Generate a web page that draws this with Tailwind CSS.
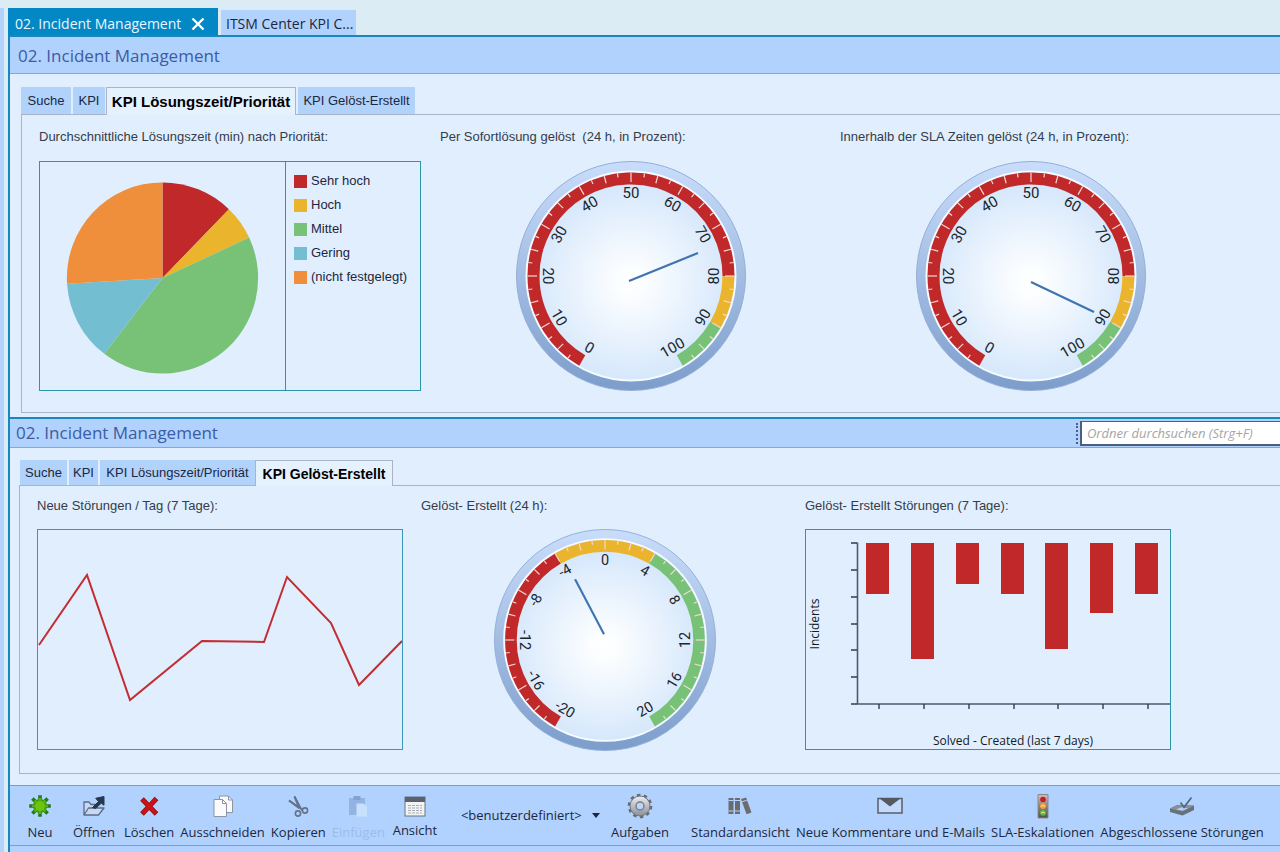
<!DOCTYPE html>
<html lang="de">
<head>
    <meta charset="UTF-8">
    <meta name="viewport" content="width=device-width, initial-scale=1.0">
    <title>02. Incident Management</title>
    <script src="https://cdn.jsdelivr.net/npm/@tailwindcss/browser@4"></script>
</head>
<body class="flex min-h-screen overflow-x-hidden bg-[#dcecf5] font-['Open_Sans','Noto_Sans',sans-serif] text-[#1c2740]">
    <div class="mt-2 w-1 shrink-0 bg-[#b3d3fd]"></div>

    <div class="flex min-w-0 grow flex-col pl-1 pt-2">
        <!-- Window tabs -->
        <nav class="flex items-end gap-[3px]">
            <button class="flex h-[27px] w-[210px] items-center gap-2.5 bg-[#0487c5] pl-[7px] pt-1 text-sm text-[#e8f6ff]">
                02. Incident Management
                <svg class="size-3.5" viewBox="0 0 14 14" stroke="#fff" stroke-width="2.4"><path d="M1.5 1.5l11 11M12.5 1.5l-11 11"/></svg>
            </button>
            <button class="h-[25px] w-[135px] bg-[#b1d2fd] pl-[5px] pt-[3px] text-left text-sm">ITSM Center KPI C...</button>
        </nav>

        <main class="flex grow flex-col border-l-2 border-t-2 border-[#1787bd] bg-[#e1eefe]">
            <!-- Upper window -->
            <header class="flex h-[37px] items-center border-b border-[#86a5d8] bg-[#b2d2fe] pl-2 pt-0.5">
                <h1 class="text-[17px] text-[#3b5ca3]">02. Incident Management</h1>
            </header>
            <section class="pl-[11px] pt-[13px] font-['Liberation_Sans',sans-serif]">
                <div class="-mb-px flex items-end text-[13px]">
                    <button class="mb-px h-[27px] w-[50px] bg-[#b1d2fb] text-center">Suche</button>
                    <button class="mb-px ml-[2px] h-[27px] w-8 bg-[#b1d2fb] text-center">KPI</button>
                    <button class="ml-px h-7 w-[190px] whitespace-nowrap border border-b-0 border-[#a9b5c6] bg-[#e6f1fe] pt-px text-[15px] font-bold text-black">KPI Lösungszeit/Priorität</button>
                    <button class="mb-px ml-[2px] h-[27px] w-[117px] whitespace-nowrap bg-[#b1d2fb] text-center">KPI Gelöst-Erstellt</button>
                </div>
                <div class="grid h-[299px] grid-cols-[401fr_400fr_440fr] border border-r-0 border-[#a9b5c6] pl-[17px] pt-3">
                    <div>
                        <h2 class="h-[34px] whitespace-nowrap text-[13px] text-[#333d4a]">Durchschnittliche Lösungszeit (min) nach Priorität:</h2>
                        <div class="flex h-[230px] w-[382px] border border-[#2d95a8]">
                            <svg id="pie" class="h-full w-[246px] border-r border-[#2d95a8]" viewBox="0 0 246 228"></svg>
                            <ul class="pl-2 pt-[7px] text-[13px] leading-6">
                                <li class="flex items-center gap-1"><span class="size-[13px] bg-[#c12829]"></span>Sehr hoch</li>
                                <li class="flex items-center gap-1"><span class="size-[13px] bg-[#ebb42d]"></span>Hoch</li>
                                <li class="flex items-center gap-1"><span class="size-[13px] bg-[#78c278]"></span>Mittel</li>
                                <li class="flex items-center gap-1"><span class="size-[13px] bg-[#74bed1]"></span>Gering</li>
                                <li class="flex items-center gap-1"><span class="size-[13px] bg-[#ef8e3b]"></span>(nicht festgelegt)</li>
                            </ul>
                        </div>
                    </div>
                    <div>
                        <h2 class="h-[34px] whitespace-nowrap text-[13px] text-[#333d4a]">Per Sofortlösung gelöst&nbsp; (24 h, in Prozent):</h2>
                        <svg id="gauge-direct" class="ml-[76px] size-[230px]" viewBox="-115 -115 230 230"></svg>
                    </div>
                    <div>
                        <h2 class="h-[34px] whitespace-nowrap text-[13px] text-[#333d4a]">Innerhalb der SLA Zeiten gelöst (24 h, in Prozent):</h2>
                        <svg id="gauge-sla" class="ml-[76px] size-[230px]" viewBox="-115 -115 230 230"></svg>
                    </div>
                </div>
            </section>

            <!-- Lower window -->
            <header class="mt-1 flex h-[31px] items-center justify-between border-b border-t-2 border-b-[#86a5d8] border-t-[#1787bd] bg-[#b2d2fe] pl-1.5">
                <h1 class="text-[17px] text-[#3b5ca3]">02. Incident Management</h1>
                <div class="flex gap-0.5">
                    <span class="my-0.5 border-l-2 border-dotted border-[#4a5f8e]"></span>
                    <input type="search" aria-label="Ordner durchsuchen" placeholder="Ordner durchsuchen (Strg+F)" class="h-[25px] w-[200px] border border-b-2 border-l-2 border-r-0 border-[#4d5f7e] bg-white pl-[5px] text-[13px] italic placeholder:text-[#a4a4a4]">
                </div>
            </header>
            <section class="pl-[9px] pt-3 font-['Liberation_Sans',sans-serif]">
                <div class="-mb-px flex items-end pl-px text-[13px]">
                    <button class="mb-px h-[25px] w-[47px] bg-[#b1d2fb] text-center">Suche</button>
                    <button class="mb-px ml-[2px] h-[25px] w-[29px] bg-[#b1d2fb] text-center">KPI</button>
                    <button class="mb-px ml-[2px] h-[25px] w-[155px] whitespace-nowrap bg-[#b1d2fb] text-center">KPI Lösungszeit/Priorität</button>
                    <button class="h-[26px] w-[138px] whitespace-nowrap border border-b-0 border-[#a9b5c6] bg-[#e6f1fe] text-sm font-bold text-black">KPI Gelöst-Erstellt</button>
                </div>
                <div class="grid h-[289px] grid-cols-[384fr_384fr_475fr] border border-r-0 border-[#a9b5c6] pl-[17px] pt-2.5">
                    <div>
                        <h2 class="h-[33px] whitespace-nowrap text-[13px] text-[#333d4a]">Neue Störungen / Tag (7 Tage):</h2>
                        <svg class="h-[221px] w-[366px] border border-[#3a97b8]" viewBox="0 0 364 219" fill="none">
                            <polyline points="1,115 49,45 92,170 164,111 226,112 249,47 293,93 321,155 364,111" stroke="#c32d31" stroke-width="2"/>
                        </svg>
                    </div>
                    <div>
                        <h2 class="h-[33px] whitespace-nowrap text-[13px] text-[#333d4a]">Gelöst- Erstellt (24 h):</h2>
                        <svg id="gauge-diff" class="ml-[73px] size-[222px]" viewBox="-115 -115 230 230"></svg>
                    </div>
                    <div>
                        <h2 class="h-[33px] whitespace-nowrap text-[13px] text-[#333d4a]">Gelöst- Erstellt Störungen (7 Tage):</h2>
                        <svg class="h-[221px] w-[366px] border border-[#2d95a8] font-['Open_Sans','Noto_Sans',sans-serif]" viewBox="0 0 364 219">
                            <g fill="#c12829">
                                <rect x="60" y="13" width="23" height="51"/>
                                <rect x="105" y="13" width="23" height="116"/>
                                <rect x="150" y="13" width="23" height="41"/>
                                <rect x="195" y="13" width="23" height="51"/>
                                <rect x="239" y="13" width="23" height="106"/>
                                <rect x="284" y="13" width="23" height="70"/>
                                <rect x="329" y="13" width="23" height="51"/>
                            </g>
                            <path d="M51.500 12.500V174H364" fill="none" stroke="#4a5a70" stroke-width="1.600"/>
                            <path d="M45 13H51M45 40H51M45 67H51M45 94H51M45 120H51M45 147H51M45 174H51M73 174V179M118 174V179M163 174V179M208 174V179M252 174V179M297 174V179M342 174V179" fill="none" stroke="#2f3c4e" stroke-width="1.400"/>
                            <text x="207" y="215" text-anchor="middle" font-size="12" fill="#111a26">Solved - Created (last 7 days)</text>
                            <text transform="translate(13 94) rotate(-90)" text-anchor="middle" font-size="12" fill="#111a26">Incidents</text>
                        </svg>
                    </div>
                </div>
            </section>

            <!-- Toolbar -->
            <footer class="mt-[11px] grow bg-[#b1d2fe]">
                <div class="flex h-[61px] items-start whitespace-nowrap border-y border-[#7d9bd0] pl-[3px] pt-1.5 text-[13px] leading-4">
                    <button class="flex min-w-[54px] flex-col items-center gap-1 px-[3px]">
                        <svg class="size-7" viewBox="0 0 28 28">
                            <path d="M14 3.200v21.600M3.200 14h21.600M6.400 6.400l15.200 15.200M21.600 6.400L6.400 21.600" stroke="#227a18" stroke-width="3.600"/>
                            <circle cx="14" cy="14" r="7" fill="#3f9a14"/>
                            <path d="M14 6v16M6 14h16M8.500 8.500l11 11M19.500 8.500l-11 11" stroke="#58b112" stroke-width="2.200"/>
                            <circle cx="14" cy="14" r="5" fill="#6cc40f"/>
                        </svg>
                        Neu
                    </button>
                    <button class="flex min-w-[54px] flex-col items-center gap-1 px-[3px]">
                        <svg class="size-7" viewBox="0 0 28 28" fill="none" stroke="#5c6b85" stroke-width="1.300" stroke-linejoin="round">
                            <path d="M4 23V10h5l2 2.500h6V16M4 23l4.500-7H24l-5.500 7z" fill="#c6daf5"/>
                            <path d="M12.500 15.500l6-6-2.800-3.200L24 4.500v8.700l-2.700-2-6 5.300z" fill="#26384f" stroke="#26384f" stroke-width="1"/>
                        </svg>
                        Öffnen
                    </button>
                    <button class="flex min-w-[54px] flex-col items-center gap-1 px-[3px]">
                        <svg class="size-7" viewBox="0 0 28 28" fill="none">
                            <path d="M7 7l14.500 15M21.500 6.500L7 22" stroke="#8e0f14" stroke-width="5"/>
                            <path d="M7.500 7.500l13.500 14M21 7L7.500 21.500" stroke="#cb1217" stroke-width="3.400"/>
                        </svg>
                        Löschen
                    </button>
                    <button class="flex min-w-[54px] flex-col items-center gap-1 px-[3px]">
                        <svg class="size-7" viewBox="0 0 28 28" fill="#fbfbfb" stroke="#8c95a3" stroke-linejoin="round">
                            <path d="M10.500 4h9l4 4v12.500h-13z"/><path d="M19.500 4v4h4" fill="none"/>
                            <path d="M5 7.500h8.500l4 4v13H5z"/><path d="M13.500 7.500v4h4" fill="none"/>
                        </svg>
                        Ausschneiden
                    </button>
                    <button class="flex min-w-[54px] flex-col items-center gap-1 px-[3px]">
                        <svg class="size-7" viewBox="0 0 28 28" fill="none" stroke="#63738c" stroke-width="1.600">
                            <path d="M10.500 4.500l7.500 14M5 8.500l14 9.500"/>
                            <path d="M10.500 4.500l5 12M5 8.500l10 7.500" stroke-width="2"/>
                            <circle cx="14" cy="21.500" r="2.600"/><circle cx="21" cy="18.500" r="2.600"/>
                        </svg>
                        Kopieren
                    </button>
                    <button disabled class="flex min-w-[54px] flex-col items-center gap-1 px-[3px] text-[#9dbbe8]">
                        <svg class="size-7" viewBox="0 0 28 28">
                            <path d="M5 6h16v17H5z" fill="#93b3e2"/><path d="M9.500 4h7v4h-7z" fill="#84a2d0"/>
                            <path d="M12.500 11.500h7l3.500 3.500v9.500H12.500z" fill="#c9e0fd"/>
                        </svg>
                        Einfügen
                    </button>
                    <button class="flex min-w-[54px] flex-col items-center gap-[2px] px-[3px]">
                        <svg class="size-7" viewBox="0 0 28 28">
                            <rect x="4" y="5" width="20" height="19" fill="#f3f3f3" stroke="#6b7280"/>
                            <path d="M4 5h20v5H4z" fill="#596273"/>
                            <path d="M7 13.500h14M7 16h14M7 18.500h14M7 21h14" stroke="#a5abb5" stroke-dasharray="3 1"/>
                        </svg>
                        Ansicht
                    </button>
                    <div class="relative ml-4 mt-[15px] w-[150px]">
                        <select aria-label="Ansicht" class="w-full appearance-none bg-transparent pl-[3px] text-[13px]">
                            <option>&lt;benutzerdefiniert&gt;</option>
                        </select>
                        <svg class="pointer-events-none absolute right-2 top-1.5 h-[5px] w-2" viewBox="0 0 8 5"><path d="M0 0h8L4 5z" fill="#1c2740"/></svg>
                    </div>
                    <button class="flex min-w-[54px] flex-col items-center gap-1 px-[3px]">
                        <svg class="size-7" viewBox="0 0 28 28">
                            <defs><linearGradient id="steel" x2="0" y2="1"><stop offset="0" stop-color="#eceef0"/><stop offset="1" stop-color="#8b8e96"/></linearGradient></defs>
                            <circle cx="14" cy="14" r="10.800" fill="none" stroke="#666b76" stroke-width="3" stroke-dasharray="3.393 3.393"/>
                            <circle cx="14" cy="14" r="10" fill="url(#steel)" stroke="#70757f" stroke-width="1"/>
                            <circle cx="14" cy="14" r="4" fill="#b9d5fb" stroke="#767b86" stroke-width="1.400"/>
                        </svg>
                        Aufgaben
                    </button>
                    <button class="ml-4 flex min-w-[54px] flex-col items-center gap-1 px-[3px]">
                        <svg class="size-7" viewBox="0 0 28 28" fill="#6d6b70">
                            <path d="M2.500 6h5v16h-5zM9 6h5v16H9zM15 7l5-1.500 5.500 15-5 1.800z"/>
                            <path d="M2.500 8.500h5M2.500 19h5M9 8.500h5M9 19h5M15.800 9.800l5-1.500" stroke="#b1d2fe"/>
                        </svg>
                        Standardansicht
                    </button>
                    <button class="flex min-w-[54px] flex-col items-center gap-1 px-[3px]">
                        <svg class="size-7" viewBox="0 0 28 28">
                            <path d="M2 6.500h24v14.500H2z" fill="#c2dbfc" stroke="#5b5e66" stroke-width="1.500"/>
                            <path d="M3 6h22l-11 8.500z" fill="#55585f"/>
                        </svg>
                        Neue Kommentare und E-Mails
                    </button>
                    <button class="flex min-w-[54px] flex-col items-center gap-1 px-[3px]">
                        <svg class="size-7" viewBox="0 0 28 28">
                            <defs><linearGradient id="lamp" x2="0" y2="1"><stop offset="0" stop-color="#d9b9b9"/><stop offset=".5" stop-color="#8d8178"/><stop offset="1" stop-color="#4c5149"/></linearGradient></defs>
                            <path d="M9 2.500h10v23.500H9z" fill="url(#lamp)" stroke="#8a8a8a"/>
                            <circle cx="14" cy="7.500" r="2.800" fill="#c11d23"/>
                            <circle cx="14" cy="14" r="3" fill="#efa137"/>
                            <circle cx="14" cy="20.800" r="3" fill="#62b545"/>
                            <path d="M12 14.500q2-2.500 4 0M12 21.300q2-2.500 4 0" fill="none" stroke="#fbe6a5"/>
                        </svg>
                        SLA-Eskalationen
                    </button>
                    <button class="flex min-w-[54px] flex-col items-center gap-1 px-[3px]">
                        <svg class="size-7" viewBox="0 0 28 28">
                            <path d="M2 16.500L9 13l17 .500v4.500L14.500 23.500 2 20z" fill="#66717b"/>
                            <path d="M2 16.500L9 13.200l17 .500-11.500 5.800z" fill="#87929c"/>
                            <path d="M8 17.500l6-2.200 6 1.200-5.500 2z" fill="#b1d2fe"/>
                            <path d="M12.500 10.500l3.500 4.800L23.500 5.500" fill="none" stroke="#5d6871" stroke-width="1.800"/>
                        </svg>
                        Abgeschlossene Störungen
                    </button>
                </div>
            </footer>
        </main>
    </div>

    <script>
        const RED = '#c12829', YELLOW = '#ebb42d', GREEN = '#78c278', BLUE = '#74bed1', ORANGE = '#ef8e3b';

        // Point at an angle in degrees, clockwise from 12 o'clock
        function polar(r, deg, cx = 0, cy = 0) {
            const a = deg * Math.PI / 180;
            return (cx + r * Math.sin(a)).toFixed(2) + ' ' + (cy - r * Math.cos(a)).toFixed(2);
        }

        function drawPie(id, slices) {
            let from = 0;
            document.getElementById(id).innerHTML = slices.map(([to, color]) => {
                const d = `M123 116L${polar(96, from, 123, 116)}A96 96 0 ${to - from > 180 ? 1 : 0} 1 ${polar(96, to, 123, 116)}Z`;
                from = to;
                return `<path d="${d}" fill="${color}"/>`;
            }).join('');
        }

        // The scale covers 300 degrees and has 40 intervals, every fourth one is labelled
        function drawGauge(id, { labels, bands, needle }) {
            let out = `<defs>
                <linearGradient id="${id}-rim" x2="0" y2="1"><stop offset="0" stop-color="#c9ddfb"/><stop offset="1" stop-color="#7c9dcb"/></linearGradient>
                <radialGradient id="${id}-face" cx=".5" cy=".53"><stop offset="0" stop-color="#fff"/><stop offset=".15" stop-color="#fbfdff"/><stop offset="1" stop-color="#d3e6fb"/></radialGradient>
            </defs>
            <circle r="114.5" fill="url(#${id}-rim)" stroke="#94afd8"/>
            <circle r="104.5" fill="url(#${id}-face)" stroke="#f6fbff" stroke-width="2"/>`;

            bands.forEach(([a, b, color]) => {
                out += `<path d="M${polar(97.5, a)}A97.5 97.5 0 ${b - a > 180 ? 1 : 0} 1 ${polar(97.5, b)}" fill="none" stroke="${color}" stroke-width="12"/>`;
            });

            for (let i = 1; i < 40; i++) {
                const deg = -150 + i * 7.5;
                const inner = i % 4 === 0 ? 94 : i % 2 === 0 ? 96 : 99.5;
                out += `<path d="M${polar(103.5, deg)}L${polar(inner, deg)}" stroke="#f1d9d4" stroke-width="1.2"/>`;
            }

            labels.forEach((label, i) => {
                const deg = -150 + i * 30;
                const turn = Math.abs(deg) >= 90 ? deg + 180 : deg;
                out += `<text transform="translate(${polar(83, deg)}) rotate(${turn})" text-anchor="middle" dy="5" font-size="15" font-family="Roboto, sans-serif" fill="#20262f">${label}</text>`;
            });

            out += `<path d="${needle}" stroke="#3f74b0" stroke-width="2.2"/>`;
            document.getElementById(id).innerHTML = out;
        }

        drawPie('pie', [[44, RED], [65, YELLOW], [217.5, GREEN], [266.5, BLUE], [360, ORANGE]]);

        const percent = [0, 10, 20, 30, 40, 50, 60, 70, 80, 90, 100];
        const percentBands = [[-150, 90, RED], [90, 120, YELLOW], [120, 150, GREEN]];
        drawGauge('gauge-direct', { labels: percent, bands: percentBands, needle: 'M-2 5L67 -23' });
        drawGauge('gauge-sla', { labels: percent, bands: percentBands, needle: 'M0 6L63 36' });
        drawGauge('gauge-diff', {
            labels: [-20, -16, -12, -8, -4, 0, 4, 8, 12, 16, 20],
            bands: [[-150, -30, RED], [-30, 30, YELLOW], [30, 150, GREEN]],
            needle: 'M-1 -6L-31 -63'
        });
    </script>
</body>
</html>
